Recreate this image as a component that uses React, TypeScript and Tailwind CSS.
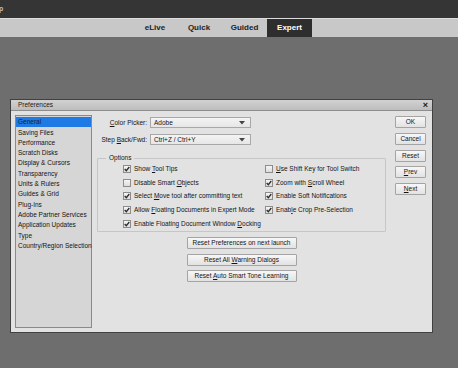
import React from "react";

const listItems = [
  "General",
  "Saving Files",
  "Performance",
  "Scratch Disks",
  "Display & Cursors",
  "Transparency",
  "Units & Rulers",
  "Guides & Grid",
  "Plug-Ins",
  "Adobe Partner Services",
  "Application Updates",
  "Type",
  "Country/Region Selection",
];

function Check({ on }: { on: boolean }) {
  return (
    <span className="w-[8px] h-[8px] shrink-0 border border-[#8c8c8c] bg-gradient-to-b from-[#f6f6f6] to-[#dcdcdc] flex items-center justify-center">
      {on && (
        <svg width="6" height="6" viewBox="0 0 6 6">
          <path d="M0.7 3 L2.3 4.7 L5.3 1" fill="none" stroke="#2a2a2a" strokeWidth="1.3" />
        </svg>
      )}
    </span>
  );
}

function Opt({ on, children }: { on: boolean; children: React.ReactNode }) {
  return (
    <div className="h-[13.7px] flex items-center gap-[3px]">
      <Check on={on} />
      <span className="whitespace-nowrap">{children}</span>
    </div>
  );
}

function Btn({ children, w = "w-[31px]" }: { children: React.ReactNode; w?: string }) {
  return (
    <div
      className={`${w} h-[12px] border border-[#a4a4a4] rounded-[1px] bg-gradient-to-b from-[#f7f7f7] to-[#e2e2e2] flex items-center justify-center whitespace-nowrap`}
    >
      {children}
    </div>
  );
}

function Select({ value }: { value: string }) {
  return (
    <div className="w-[101px] h-[11px] border border-[#a8a8a8] bg-gradient-to-b from-[#f4f4f4] to-[#e6e6e6] flex items-center justify-between pl-[3px] pr-[5px]">
      <span>{value}</span>
      <svg width="6" height="4" viewBox="0 0 6 4">
        <path d="M0 0 H6 L3 3.5 Z" fill="#444" />
      </svg>
    </div>
  );
}

export default function App() {
  return (
    <div className="w-[458px] h-[368px] bg-[#6e6e6e] overflow-hidden font-['Liberation_Sans',Arial,sans-serif]">
      {/* app bar */}
      <div className="h-[18px] bg-[#353535] flex items-center">
        <span className="-ml-[1px] text-[7px] font-bold text-[#bdbdbd]">p</span>
      </div>

      {/* mode tabs */}
      <div className="h-[19px] bg-[#c8c8c8] border-t border-[#dcdcdc] flex pl-[134px] text-[8px] font-bold text-[#1e1e1e]">
        <div className="w-[42px] flex items-center justify-center">eLive</div>
        <div className="w-[46px] flex items-center justify-center">Quick</div>
        <div className="w-[45px] flex items-center justify-center">Guided</div>
        <div className="w-[45px] flex items-center justify-center bg-[#2e2e2e] text-white">Expert</div>
      </div>

      {/* Preferences dialog */}
      <div className="ml-[10px] mt-[62px] w-[423px] h-[234px] border border-[#404040] bg-[#e2e2e2] flex flex-col text-[6.5px] text-[#141414]">
        <div className="h-[11px] shrink-0 bg-gradient-to-b from-[#d2d2d2] to-[#bdbdbd] border-b border-[#8e8e8e] flex items-center justify-between pl-[7px] pr-[4px]">
          <span className="text-[#202020]">Preferences</span>
          <span className="text-[9px] font-bold leading-none text-[#1a1a1a]">×</span>
        </div>

        <div className="flex flex-1 pt-[4px] pl-[4px] pr-[6px] pb-[5px]">
          {/* category list */}
          <div className="w-[77px] h-[213px] border border-[#8a8a8a] bg-[#d6d6d6] pt-[1px]">
            {listItems.map((item, i) => (
              <div
                key={item}
                className={`h-[10.3px] flex items-center pl-[2px] whitespace-nowrap ${
                  i === 0 ? "bg-[#1f7ae6] text-[#10233f]" : ""
                }`}
              >
                {item}
              </div>
            ))}
          </div>

          {/* main settings */}
          <div className="ml-[5px] w-[289px] flex flex-col">
            <div className="mt-[2px] flex items-center">
              <div className="w-[50px] text-right">
                <span className="underline">C</span>olor Picker:
              </div>
              <div className="ml-[3px]">
                <Select value="Adobe" />
              </div>
            </div>
            <div className="mt-[6px] flex items-center">
              <div className="w-[50px] text-right whitespace-nowrap">
                Step <span className="underline">B</span>ack/Fwd:
              </div>
              <div className="ml-[3px]">
                <Select value="Ctrl+Z / Ctrl+Y" />
              </div>
            </div>

            <fieldset className="mt-[9px] h-[78px] border border-[#c6c6c6] rounded-[1px]">
              <legend className="ml-[8px] px-[3px] leading-[8px]">Options</legend>
              <div className="grid grid-cols-[142px_1fr] pl-[25px]">
                <Opt on>
                  Show <span className="underline">T</span>ool Tips
                </Opt>
                <Opt on={false}>
                  <span className="underline">U</span>se Shift Key for Tool Switch
                </Opt>
                <Opt on={false}>
                  Disable Smart <span className="underline">O</span>bjects
                </Opt>
                <Opt on>
                  Zoom with <span className="underline">S</span>croll Wheel
                </Opt>
                <Opt on>
                  Select <span className="underline">M</span>ove tool after committing text
                </Opt>
                <Opt on>Enable Soft Notifications</Opt>
                <Opt on>
                  Allow <span className="underline">F</span>loating Documents in Expert Mode
                </Opt>
                <Opt on>
                  Enab<span className="underline">l</span>e Crop Pre-Selection
                </Opt>
                <div className="col-span-2">
                  <Opt on>
                    Enable Floating Document Window <span className="underline">D</span>ocking
                  </Opt>
                </div>
              </div>
            </fieldset>

            <div className="mt-[5px] flex flex-col items-center gap-[4.5px]">
              <Btn w="w-[110px]">Reset Preferences on next launch</Btn>
              <Btn w="w-[110px]">
                <span>
                  Reset All <span className="underline">W</span>arning Dialogs
                </span>
              </Btn>
              <Btn w="w-[110px]">
                <span>
                  Reset <span className="underline">A</span>uto Smart Tone Learning
                </span>
              </Btn>
            </div>
          </div>

          {/* dialog buttons */}
          <div className="ml-[9px] mt-[1px] flex flex-col gap-[4.75px]">
            <Btn>OK</Btn>
            <Btn>Cancel</Btn>
            <Btn>Reset</Btn>
            <Btn>
              <span>
                <span className="underline">P</span>rev
              </span>
            </Btn>
            <Btn>
              <span>
                <span className="underline">N</span>ext
              </span>
            </Btn>
          </div>
        </div>
      </div>
    </div>
  );
}
